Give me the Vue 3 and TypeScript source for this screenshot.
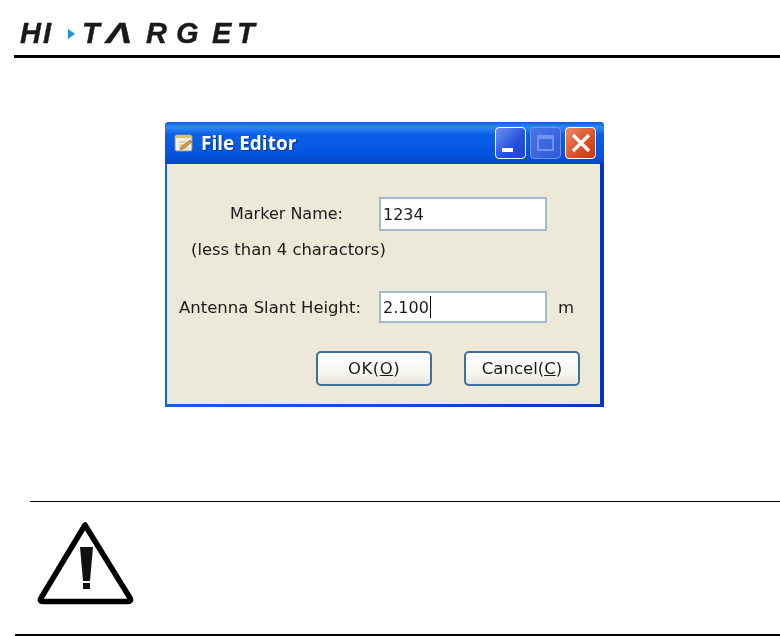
<template>
  <div class="page">
    <header class="logo-bar">
      <div class="logo">
        <span
          v-for="item in logoLeft"
          :key="item.ch"
          class="logo-letter"
          :style="{ width: item.w + 'px' }"
        >{{ item.ch }}</span>
        <span class="logo-arrow-cell">
          <svg width="7" height="10" viewBox="0 0 7 10">
            <path d="M0 0 L7 5 L0 10 Z" fill="#1b93dc" />
          </svg>
        </span>
        <span
          v-for="(item, i) in logoRight"
          :key="i"
          class="logo-letter"
          :class="{ wide: item.ch === '\u039B' }"
          :style="{ width: item.w + 'px' }"
        >{{ item.ch }}</span>
      </div>
    </header>

    <main class="stage">
      <section class="dialog">
        <div class="titlebar">
          <svg class="app-icon" width="20" height="20" viewBox="0 0 20 20">
            <rect x="1" y="2" width="17" height="16" rx="1.5" fill="#f2efe2" stroke="#8d8d80" />
            <rect x="2" y="2" width="15" height="3" fill="#d8c36a" />
            <path d="M5 9h8M5 12h6M5 15h9" stroke="#b9b8ab" stroke-width="1" />
            <path d="M7 14 L16 7 L18 9 L9 16 L6.5 16.5 Z" fill="#d69a3c" stroke="#8a5a20" stroke-width=".6" />
          </svg>
          <span class="title">File Editor</span>
          <div class="win-buttons">
            <button class="win-btn min"><i class="min-glyph"></i></button>
            <button class="win-btn max"><i class="max-glyph"></i></button>
            <button class="win-btn close">
              <svg width="20" height="20" viewBox="0 0 20 20">
                <path d="M2 2 L18 18 M18 2 L2 18" stroke="#fff" stroke-width="3.2" />
              </svg>
            </button>
          </div>
        </div>

        <div class="client">
          <div class="form">
            <label class="label marker">Marker Name:</label>
            <input class="field" type="text" value="1234" />
            <span></span>
            <div class="note">(less than 4 charactors)</div>
            <span></span>
            <span></span>
            <label class="label">Antenna Slant Height:</label>
            <div class="field caret-field">2.100<i class="caret"></i></div>
            <span class="unit">m</span>
          </div>
          <div class="actions">
            <button class="push ok">OK(<u>O</u>)</button>
            <button class="push">Cancel(<u>C</u>)</button>
          </div>
        </div>
      </section>
    </main>

    <section class="warning">
      <svg class="warn-icon" width="104" height="92" viewBox="0 0 104 92">
        <path d="M51 7 L7 80 Q5 83.5 9 83.5 L93 83.5 Q98 83.5 96 80 Z" fill="#fff" stroke="#000" stroke-width="5.5" stroke-linejoin="round" />
        <path d="M46 29 H59 L56 63 H49 Z" fill="#111" />
        <rect x="49" y="65" width="7" height="6" fill="#111" />
      </svg>
    </section>
    <div class="bottom-rule"></div>
  </div>
</template>

<script setup lang="ts">
  // the wordmark is spaced unevenly, so each letter keeps its own cell width
  const logoLeft = [
    { ch: 'H', w: 23 },
    { ch: 'I', w: 25 },
  ];
  const logoRight = [
    { ch: 'T', w: 24 },
    { ch: '\u039B', w: 40 },
    { ch: 'R', w: 30 },
    { ch: 'G', w: 36 },
    { ch: 'E', w: 25 },
    { ch: 'T', w: 24 },
  ];
</script>

<style>
  html,
  body {
    background: #fff;
  }
</style>

<style scoped>
  .page {
    width: 780px;
    height: 636px;
    overflow: hidden;
    font-family: "DejaVu Sans", sans-serif;
  }

  .logo-bar {
    height: 55px;
    margin-left: 14px;
    border-bottom: 3px solid #000;
  }

  .logo {
    display: flex;
    padding: 19px 0 0 6px;
    font: italic bold 29px/29px "Liberation Sans", sans-serif;
    color: #1a1a1a;
    filter: blur(0.4px);
  }

  .logo-letter {
    display: block;
    -webkit-text-stroke: 0.4px #1a1a1a;
  }

  .wide {
    transform: scaleX(1.35);
    transform-origin: left center;
  }

  .logo-arrow-cell {
    width: 14px;
    padding-top: 10px;
  }

  .logo-arrow-cell svg {
    display: block;
  }

  .stage {
    padding: 64px 0 0 165px;
    height: 443px;
    box-sizing: border-box;
  }

  .dialog {
    width: 439px;
    height: 285px;
    display: flex;
    flex-direction: column;
    background: linear-gradient(90deg, #0d5ff0, #0a4fe0 50%, #0336c0);
    border-radius: 4px 4px 0 0;
    filter: blur(0.35px);
  }

  .titlebar {
    height: 42px;
    display: flex;
    align-items: center;
    padding: 0 8px 0 9px;
    gap: 7px;
    background: linear-gradient(180deg, #0a5be6 0%, #2f8af5 12%, #0b5fe8 30%, #0355e0 75%, #0346c8 100%);
    border-radius: 4px 4px 0 0;
  }

  .title {
    font: bold 19px "Open Sans", sans-serif;
    color: #fff;
    text-shadow: 1px 1px 1px #0a2f90;
  }

  .win-buttons {
    margin-left: auto;
    display: flex;
    gap: 4px;
  }

  .win-btn {
    width: 31px;
    height: 32px;
    padding: 0;
    border: 1px solid #fff;
    border-radius: 4px;
    display: flex;
    align-items: center;
    justify-content: center;
  }

  .min {
    background: linear-gradient(135deg, #6d90f0, #2450dc 60%, #1f46c8);
  }

  .max {
    background: linear-gradient(135deg, #4a74e4, #2f5ad8);
    border-color: #6f93ec;
  }

  .close {
    background: linear-gradient(135deg, #e88a66, #dc4f24 60%, #c43a12);
  }

  .min-glyph {
    width: 11px;
    height: 4px;
    background: #fff;
    margin: 14px 6px 0 0;
  }

  .max-glyph {
    width: 17px;
    height: 16px;
    border: 2px solid #6f93ec;
    border-top-width: 4px;
    box-sizing: border-box;
  }

  .client {
    flex: 1;
    margin: 0 4px 3px 2px;
    background: #ece9d8;
    padding: 33px 20px 0 12px;
  }

  .form {
    display: grid;
    grid-template-columns: 182px 168px auto;
    column-gap: 18px;
    grid-template-rows: 34px 60px 32px;
    align-items: center;
  }

  .label {
    font-size: 16.5px;
    color: #1a1a1a;
    white-space: nowrap;
  }

  .marker {
    font-size: 16px;
    padding-left: 51px;
    padding-bottom: 2px;
  }

  .note {
    font-size: 16.4px;
    color: #1a1a1a;
    text-align: center;
    white-space: nowrap;
    padding-bottom: 24px;
    padding-left: 12px;
  }

  .field {
    width: 168px;
    height: 100%;
    box-sizing: border-box;
    border: 2px solid #a4b9cc;
    background: #fff;
    padding: 0 2px;
    font: 16px "DejaVu Sans", sans-serif;
    color: #1a1a1a;
    outline: none;
  }

  .caret-field {
    display: flex;
    align-items: center;
  }

  .caret {
    width: 1px;
    height: 22px;
    background: #000;
    margin-left: 1px;
  }

  .unit {
    font-size: 16.5px;
    color: #1a1a1a;
    margin-left: -7px;
  }

  .actions {
    display: flex;
    justify-content: flex-end;
    gap: 32px;
    margin-top: 28px;
  }

  .push {
    width: 116px;
    height: 35px;
    padding: 0;
    border: 2px solid #3f6f9c;
    border-radius: 5px;
    background: linear-gradient(180deg, #fff 0%, #f5f4ee 70%, #e6e3d6 100%);
    font: 16.5px "DejaVu Sans", sans-serif;
    color: #1a1a1a;
  }

  .ok {
    letter-spacing: 0.5px;
  }

  .warning {
    margin-left: 30px;
    height: 133px;
    border-top: 1px solid #000;
    padding: 16px 0 0 4px;
    box-sizing: border-box;
  }

  .warn-icon {
    filter: blur(0.5px);
  }

  .bottom-rule {
    margin-left: 15px;
    height: 2px;
    background: #000;
  }
</style>
